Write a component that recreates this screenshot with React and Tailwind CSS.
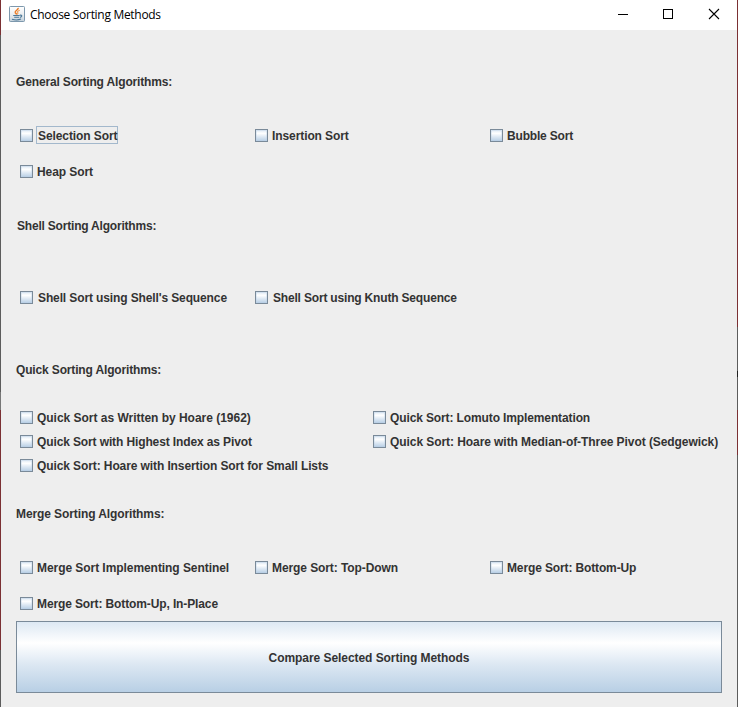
import React from "react";

const JAVA_FONT = "font-['Liberation_Sans',Arial,sans-serif] text-[12px] leading-[14px] font-bold text-[#333333] whitespace-pre";

function Check({ label, focused, pad, shift, tracking = "tracking-[-0.02px]" }) {
  return (
    <label className={`flex items-start ${pad}`}>
      <span className="box-border h-[13px] w-[13px] shrink-0 border border-[#7a8a99] bg-[linear-gradient(180deg,#dde8f3_0%,#ffffff_30%,#dde8f3_62%,#b8cfe5_100%)] shadow-[inset_0_0_0_1px_rgba(184,207,229,0.35)]" />
      <span
        className={`-mt-[3px] box-border h-[18px] border pt-[2px] ${shift ? "ml-[3px]" : "ml-[2px]"} ${JAVA_FONT} ${tracking} ${
          focused ? "w-[82px] border-[#a3b8cc]" : "border-transparent"
        }`}
      >
        <span className="block pl-px">{label}</span>
      </span>
    </label>
  );
}

function Heading({ children, tracking, indent = "" }) {
  return (
    <div className={`h-[72px] pt-[30px] ${indent} ${JAVA_FONT} ${tracking}`}>{children}</div>
  );
}

function JavaIcon() {
  return (
    <svg width="16" height="16" viewBox="0 0 16 16" fill="none">
      <defs>
        <linearGradient id="tile" x1="0" y1="0" x2="0" y2="1">
          <stop offset="0" stopColor="#ffffff" />
          <stop offset="0.5" stopColor="#eceff1" />
          <stop offset="1" stopColor="#c3d0da" />
        </linearGradient>
      </defs>
      <rect x="0.5" y="0.5" width="15" height="15" rx="0.8" fill="url(#tile)" stroke="#7d98ad" />
      <path d="M9.2 1.8C9.6 4 5.6 4.6 6.3 6.6C6.6 7.3 7.4 7.6 7.6 8.6" stroke="#ea7a24" strokeWidth="1.5" />
      <path d="M10.7 4.2C8.6 5 8.1 5.7 8.8 6.6C9.2 7.2 8.8 7.9 8.2 8.4" stroke="#f09a4e" strokeWidth="1.1" />
      <path d="M4.2 9.5H10.6M5.2 11.3H10M3 13.3C5.8 14.1 9.8 14 12 13.1M10.8 9.2C13.6 8.6 13.2 11 10.8 11.4" stroke="#4a7797" strokeWidth="1.1" />
    </svg>
  );
}

export default function App() {
  return (
    <div className="flex h-[707px] w-[738px] overflow-hidden bg-[#eeeeee]">
      <div className="flex w-px shrink-0 flex-col">
        <div className="h-[35px] bg-[#7b3033]" />
        <div className="h-[357px] bg-[#5c5c5c]" />
        <div className="h-[18px] bg-[#777777]" />
        <div className="h-[240px] bg-[#7b3033]" />
        <div className="flex-1 bg-[#5c5c5c]" />
      </div>

      <div className="flex w-[736px] shrink-0 flex-col">
        <header className="flex h-[30px] shrink-0 items-start bg-white">
          <div className="ml-[8px] mt-[6px] h-[16px] w-[16px]">
            <JavaIcon />
          </div>
          <span className="ml-[5px] mt-[7px] whitespace-pre font-['Open_Sans','Noto_Sans',sans-serif] text-[12px] leading-[16px] tracking-[-0.3px] text-black">
            Choose Sorting Methods
          </span>
          <div className="ml-auto flex h-[30px]">
            <svg width="46" height="30" viewBox="0 0 46 30" shapeRendering="crispEdges">
              <path d="M18 14.5H28" stroke="#000" />
            </svg>
            <svg width="46" height="30" viewBox="0 0 46 30" shapeRendering="crispEdges">
              <rect x="17.5" y="9.5" width="9" height="9" fill="none" stroke="#000" />
            </svg>
            <svg width="45" height="30" viewBox="0 0 45 30">
              <path d="M17 9L27 19M27 9L17 19" stroke="#000" strokeWidth="1.1" />
            </svg>
          </div>
        </header>

        <main className="flex flex-1 flex-col pl-[15px] pr-[15px] pt-[15px]">
          <Heading tracking="tracking-[-0.15px]">General Sorting Algorithms:</Heading>
          <div className="grid h-[72px] grid-cols-[235px_235px_235px] grid-rows-[36px_36px] pl-[4px]">
            <Check label="Selection Sort" focused shift pad="pt-[12px]" tracking="tracking-[-0.09px]" />
            <Check label="Insertion Sort" pad="pt-[12px]" tracking="tracking-[-0.09px]" />
            <Check label="Bubble Sort" pad="pt-[12px]" tracking="tracking-[-0.18px]" />
            <Check label="Heap Sort" pad="pt-[12px]" tracking="tracking-[-0.07px]" />
          </div>

          <Heading tracking="tracking-[-0.2px]" indent="pl-px">Shell Sorting Algorithms:</Heading>
          <div className="grid h-[72px] grid-cols-[235px_235px_235px] pl-[4px]">
            <Check label="Shell Sort using Shell's Sequence" shift pad="pt-[30px]" tracking="tracking-[-0.12px]" />
            <Check label="Shell Sort using Knuth Sequence" shift pad="pt-[30px]" tracking="tracking-[-0.18px]" />
          </div>

          <Heading tracking="tracking-[-0.15px]">Quick Sorting Algorithms:</Heading>
          <div className="grid h-[72px] grid-cols-[353px_353px] grid-rows-[24px_24px_24px] pl-[4px]">
            <Check label="Quick Sort as Written by Hoare (1962)" pad="pt-[6px]" />
            <Check label="Quick Sort: Lomuto Implementation" pad="pt-[6px]" tracking="tracking-[-0.12px]" />
            <Check label="Quick Sort with Highest Index as Pivot" pad="pt-[6px]" tracking="tracking-[-0.12px]" />
            <Check label="Quick Sort: Hoare with Median-of-Three Pivot (Sedgewick)" pad="pt-[6px]" tracking="tracking-[-0.07px]" />
            <Check label="Quick Sort: Hoare with Insertion Sort for Small Lists" pad="pt-[6px]" tracking="tracking-[-0.1px]" />
          </div>

          <Heading tracking="tracking-[-0.1px]">Merge Sorting Algorithms:</Heading>
          <div className="grid h-[72px] grid-cols-[235px_235px_235px] grid-rows-[36px_36px] pl-[4px]">
            <Check label="Merge Sort Implementing Sentinel" pad="pt-[12px]" tracking="tracking-[-0.06px]" />
            <Check label="Merge Sort: Top-Down" pad="pt-[12px]" tracking="tracking-[-0.09px]" />
            <Check label="Merge Sort: Bottom-Up" pad="pt-[12px]" tracking="tracking-[-0.13px]" />
            <Check label="Merge Sort: Bottom-Up, In-Place" pad="pt-[12px]" tracking="tracking-[-0.12px]" />
          </div>

          <button
            type="button"
            className={`flex h-[72px] w-[706px] items-center justify-center border border-[#7a8a99] bg-[linear-gradient(180deg,#dde8f3_0%,#ffffff_30%,#dde8f3_60%,#b8cfe5_100%)] pt-[2px] tracking-[-0.06px] ${JAVA_FONT}`}
          >
            Compare Selected Sorting Methods
          </button>
        </main>
      </div>

      <div className="flex w-px shrink-0 flex-col">
        <div className="h-[327px] bg-[#7b3033]" />
        <div className="h-[44px] bg-[#5c5c5c]" />
        <div className="h-[6px] bg-[#1f1f1f]" />
        <div className="h-[33px] bg-[#5c5c5c]" />
        <div className="h-[45px] bg-[#7b3033]" />
        <div className="flex-1 bg-[#5c5c5c]" />
      </div>
    </div>
  );
}
